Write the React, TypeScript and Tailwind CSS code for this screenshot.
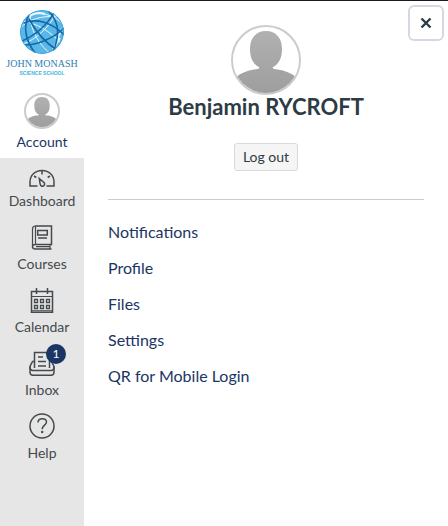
import React from "react";

function Avatar({ className }: { className: string }) {
  return (
    <span className={`block overflow-hidden rounded-full border-[#c7cdd1] bg-white ${className}`}>
      <svg viewBox="0 0 66 66" className="block h-full w-full" aria-hidden="true">
        <defs>
          <linearGradient id="person" x1="0" y1="0" x2="0" y2="66" gradientUnits="userSpaceOnUse">
            <stop offset="0" stopColor="#b2b2b2" />
            <stop offset="1" stopColor="#9e9e9e" />
          </linearGradient>
        </defs>
        <path
          fill="url(#person)"
          d="M33 4C43 4 49 11 49 22C49 31 46 37 39.500 40.500C40 42 42 42 45 42.500C52 43.500 58 46 63 50V66H3V50C8 46 14 43.500 21 42.500C24 42 26 42 26.500 40.500C20 37 17 31 17 22C17 11 23 4 33 4Z"
        />
      </svg>
    </span>
  );
}

function Logo() {
  return (
    <a href="#home" className="flex h-[84px] flex-col items-center pt-2 no-underline">
      <svg viewBox="0 0 46 46" className="h-[46px] w-[46px] shrink-0" fill="none" aria-hidden="true">
        <defs>
          <clipPath id="globe">
            <circle cx="23" cy="23" r="22" />
          </clipPath>
        </defs>
        <g clipPath="url(#globe)">
          <circle cx="23" cy="23" r="22" fill="#5ab8e8" />
          <g stroke="#e9f7fd" strokeWidth="1">
            <path d="M1 19C9 11 22 6 38 8" />
            <path d="M3 12C17 14 31 22 43 35" />
            <path d="M12 1C9 15 17 34 33 46" />
            <path d="M4 35C16 31 31 18 37 4" />
            <path d="M7 7C20 2 34 5 44 15" />
            <path d="M38 30L43 20M34 40L41 29" strokeWidth="2" />
            <path d="M8 9C14 4 20 3 26 5" strokeWidth="2" />
          </g>
          <g stroke="#1468a8" strokeWidth="1.6">
            <path d="M10 6C4 17 6 32 17 45" />
            <path d="M5 14C17 9 33 13 45 26" />
            <path d="M3 32C15 27 29 16 35 3" />
            <path d="M6 36C19 36 35 29 45 19" />
            <path d="M10 10C17 23 25 33 38 41" />
            <path d="M28 1C39 10 42 24 34 43" />
          </g>
          <circle cx="23" cy="23" r="21.500" stroke="#3d9fd5" />
        </g>
      </svg>
      <span className="mt-[3px] whitespace-nowrap font-['Liberation_Serif',serif] text-[10px] leading-3 text-[#2e7db5]">
        JOHN MONASH
      </span>
      <span className="whitespace-nowrap font-['Liberation_Sans',sans-serif] text-[5px] font-bold leading-[6px] text-[#45b4e4]">
        SCIENCE SCHOOL
      </span>
    </a>
  );
}

const iconProps = {
  viewBox: "0 0 26 26",
  className: "h-[26px] w-[26px]",
  fill: "none",
  stroke: "#444a4e",
  strokeWidth: 1.5,
  "aria-hidden": true,
} as const;

const DashboardIcon = () => (
  <svg {...iconProps}>
    <path d="M8.500 25H1V21C1 14.500 6 9.500 13 9.500S25 14.500 25 21V25H17.500" />
    <path d="M13 10V13.500M5 15L7.300 16.500M21 15L18.700 16.500" />
    <path d="M10.300 17.500L15.200 21.800C16.200 23.500 15 25.300 13.400 25.300C12 25.300 11.200 24.300 11.100 22.800Z" />
  </svg>
);

const CoursesIcon = () => (
  <svg {...iconProps}>
    <path d="M6.500 2H22.500V20.500H6.500C4.500 20.500 3.500 21.300 3.500 22.700C3.500 24.300 4.500 25 6.500 25H22.500" />
    <path d="M3.500 22.500V5C3.500 3 4.500 2 6.500 2V20.500M21 20.500V25M7 22.700H21" strokeWidth="1.200" />
    <path d="M8.700 6.500H18.300V11H8.700ZM9 14H18" />
  </svg>
);

const CalendarIcon = () => (
  <svg {...iconProps}>
    <path d="M2.500 4.500H23.500V25.500H2.500Z" />
    <path d="M2.500 9.500H23.500M2.500 23.800H23.500" strokeWidth="1.200" />
    <path d="M7.500 1V7M18.500 1V7" />
    <path
      d="M5.500 12.500H8.500V15.500H5.500ZM11.500 12.500H14.500V15.500H11.500ZM17.500 12.500H20.500V15.500H17.500ZM5.500 18.500H8.500V21.500H5.500ZM11.500 18.500H14.500V21.500H11.500ZM17.500 18.500H20.500V21.500H17.500Z"
      strokeWidth="1.300"
    />
  </svg>
);

const InboxIcon = () => (
  <svg {...iconProps}>
    <path d="M5.500 18V2.500H20.500V18M9 7H14M9 11.500H17M9 16H17" />
    <path d="M5.500 11.500H3.500L1 16.500V22C1 24.500 2 25.300 4 25.300H22C24 25.300 25 24.500 25 22V16.500L22.500 11.500H20.500" />
    <path d="M1 16.500C1 19.500 2 20.500 4 20.500H22C24 20.500 25 19.500 25 16.500" />
  </svg>
);

const HelpIcon = () => (
  <svg {...iconProps}>
    <circle cx="13" cy="13" r="12" />
    <path d="M9 9.500C9 4.500 17.500 4.500 17.500 9C17.500 12 13.200 12.300 13.200 16.200" />
    <circle cx="13.200" cy="19" r="1.200" fill="#444a4e" stroke="none" />
  </svg>
);

const navItems = [
  { label: "Dashboard", Icon: DashboardIcon },
  { label: "Courses", Icon: CoursesIcon },
  { label: "Calendar", Icon: CalendarIcon },
  { label: "Inbox", Icon: InboxIcon, count: 1 },
  { label: "Help", Icon: HelpIcon },
];

const accountLinks = ["Notifications", "Profile", "Files", "Settings", "QR for Mobile Login"];

export default function App() {
  return (
    <div className="flex min-h-screen border-t border-[#1c1a1f] bg-white font-['Lato',sans-serif] text-[#2d3b45]">
      <nav aria-label="Global navigation" className="w-[84px] shrink-0 bg-[#e6e6e6]">
        <div className="bg-white">
          <Logo />
          <button type="button" className="flex h-[73px] w-full flex-col items-center pt-2 text-sm leading-5 text-[#1b3564]">
            <Avatar className="h-9 w-9 border-2" />
            <span className="mt-[3px]">Account</span>
          </button>
        </div>
        <ul>
          {navItems.map(({ label, Icon, count }) => (
            <li key={label}>
              <a href={`#${label.toLowerCase()}`} className="flex h-[63px] flex-col items-center pt-[3px] text-sm leading-5 text-[#444a4e]">
                <span className="relative">
                  <Icon />
                  {count && (
                    <span className="absolute -top-1.5 left-[17px] flex h-5 w-5 items-center justify-center rounded-full bg-[#1b3564] text-xs text-white">
                      {count}
                    </span>
                  )}
                </span>
                <span className="mt-1">{label}</span>
              </a>
            </li>
          ))}
        </ul>
      </nav>

      <main className="relative min-w-0 flex-1 px-6 pt-6">
        <button
          type="button"
          aria-label="Close"
          className="absolute right-1 top-1 flex h-9 w-9 items-center justify-center rounded-md border-2 border-[#d5d8e3] bg-white"
        >
          <svg viewBox="0 0 12 12" className="h-3 w-3" stroke="#2d3b45" strokeWidth="2.400" aria-hidden="true">
            <path d="M1.500 1.500L10.500 10.500M10.500 1.500L1.500 10.500" />
          </svg>
        </button>
        <header className="flex flex-col items-center border-b border-[#c7cdd1] pb-7">
          <Avatar className="h-[70px] w-[70px] border-2" />
          <h2 className="text-[22px] font-bold leading-6">Benjamin RYCROFT</h2>
          <button
            type="button"
            className="mt-6 h-7 rounded-[3px] border border-[#d8dadc] bg-[#f5f5f5] px-2 text-sm leading-5"
          >
            Log out
          </button>
        </header>
        <ul className="flex flex-col gap-3 pt-5 text-base leading-6 text-[#1b3564]">
          {accountLinks.map((label) => (
            <li key={label}>
              <a href="#account">{label}</a>
            </li>
          ))}
        </ul>
      </main>
    </div>
  );
}
